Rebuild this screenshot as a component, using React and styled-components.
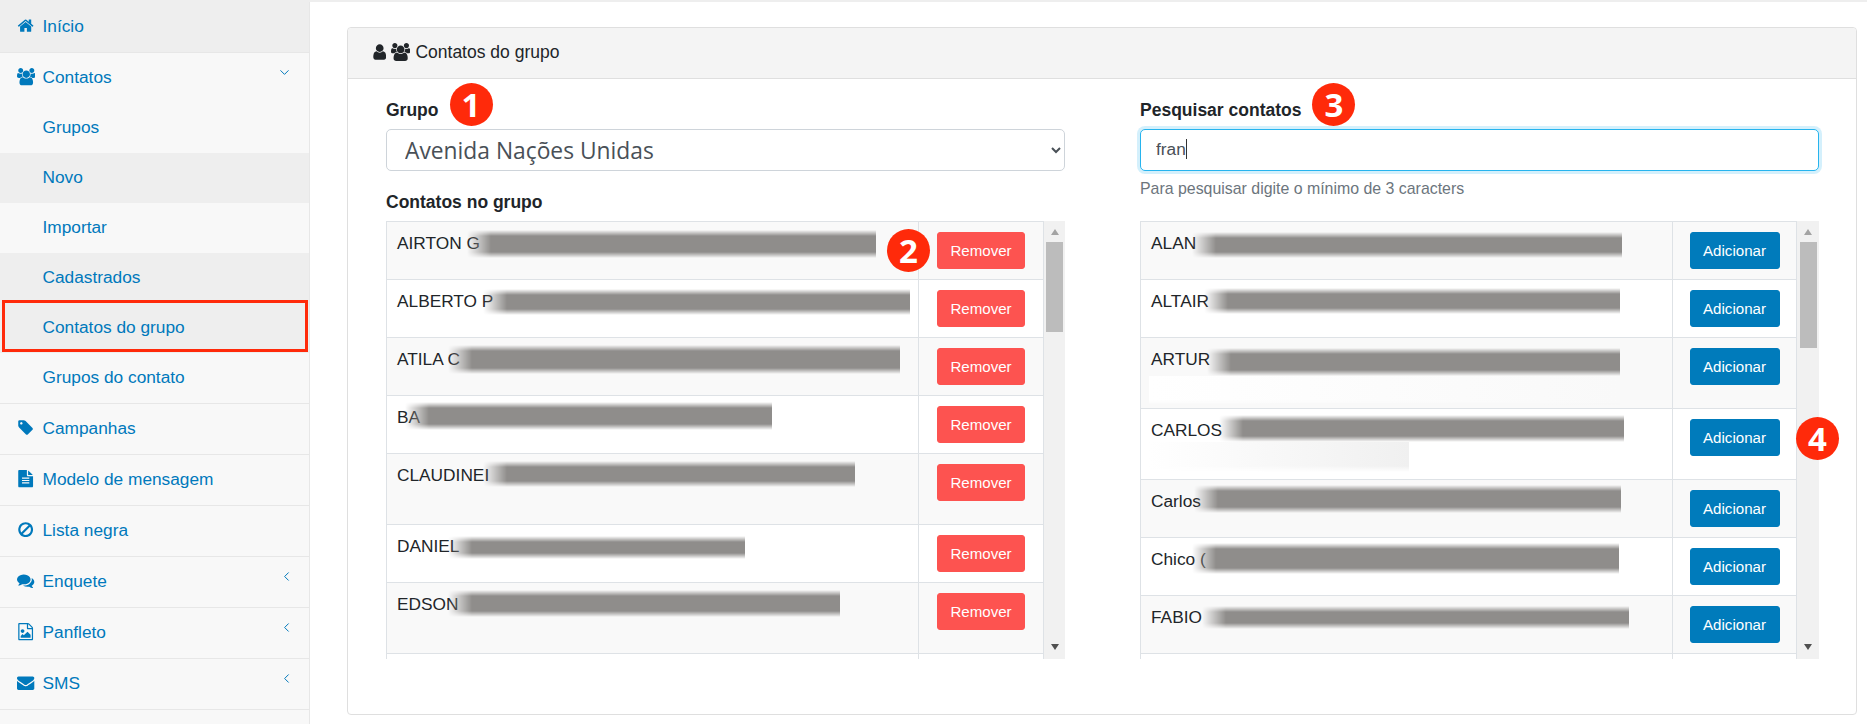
import styled, { createGlobalStyle } from 'styled-components'
import { ChevronDown, ChevronLeft } from 'lucide-react'

const GlobalStyle = createGlobalStyle`
  html, body {
    margin: 0;
    height: 100%;
    overflow: hidden;
    background: #fff;
  }
  body {
    font-family: "Liberation Sans", Arial, sans-serif;
    font-size: 17.3px;
    color: #212529;
  }
  * { box-sizing: border-box; }
`

// Font Awesome 4 glyphs, the react-icons set only has the newer shapes
const glyphs = {
  home: ['0 0 1792 1792', 'M1472 992v480q0 26-19 45t-45 19h-384v-384h-256v384h-384q-26 0-45-19t-19-45v-480q0-1 .5-3t.5-3l575-474 575 474q1 2 1 6zm223-69l-62 74q-8 9-21 11h-3q-13 0-21-7l-692-577-692 577q-12 8-24 7-13-2-21-11l-62-74q-8-10-7-23.5t11-21.5l719-599q32-26 76-26t76 26l244 204v-195q0-14 9-23t23-9h192q14 0 23 9t9 23v408l219 182q10 8 11 21.5t-7 23.5z'],
  users: ['64 0 1920 1792', 'M657 896q-162 5-265 128h-134q-82 0-138-40.5t-56-118.5q0-353 124-353 6 0 43.5 21t97.5 42.5 119 21.5q67 0 133-23-5 37-5 66 0 139 81 256zm1071 637q0 120-73 189.5t-194 69.5h-874q-121 0-194-69.5t-73-189.5q0-53 3.5-103.5t14-109 26.5-108.5 43-97.5 62-81 85.5-53.5 111.5-20q10 0 43 21.5t73 48 107 48 135 21.5 135-21.5 107-48 73-48 43-21.5q61 0 111.5 20t85.5 53.5 62 81 43 97.5 26.5 108.5 14 109 3.5 103.5zm-1024-1277q0 106-75 181t-181 75-181-75-75-181 75-181 181-75 181 75 75 181zm704 384q0 159-112.5 271.5t-271.5 112.5-271.5-112.5-112.5-271.5 112.5-271.5 271.5-112.5 271.5 112.5 112.5 271.5zm576 225q0 78-56 118.5t-138 40.5h-134q-103-123-265-128 81-117 81-256 0-29-5-66 66 23 133 23 59 0 119-21.5t97.5-42.5 43.5-21q124 0 124 353zm-128-609q0 106-75 181t-181 75-181-75-75-181 75-181 181-75 181 75 75 181z'],
  user: ['128 0 1408 1792', 'M1536 1399q0 109-62.5 187t-150.5 78h-854q-88 0-150.5-78t-62.5-187q0-85 8.5-160.5t31.5-152 58.5-131 94-89 134.5-34.5q131 128 313 128t313-128q76 0 134.5 34.5t94 89 58.5 131 31.5 152 8.5 160.5zm-256-887q0 159-112.5 271.5t-271.5 112.5-271.5-112.5-112.5-271.5 112.5-271.5 271.5-112.5 271.5 112.5 112.5 271.5z'],
  tag: ['0 0 1792 1792', 'M576 448q0-53-37.5-90.5t-90.5-37.5-90.5 37.5-37.5 90.5 37.5 90.5 90.5 37.5 90.5-37.5 37.5-90.5zm1067 576q0 53-37 90l-491 492q-39 37-91 37-53 0-90-37l-715-716q-38-37-64.5-101t-26.5-117v-416q0-52 38-90t90-38h416q53 0 117 26.5t102 64.5l715 714q37 39 37 91z'],
  file: ['0 0 1792 1792', 'M1596 476q14 14 28 36h-472v-472q22 14 36 28zm-476 164h544v1056q0 40-28 68t-68 28h-1344q-40 0-68-28t-28-68v-1600q0-40 28-68t68-28h800v544q0 40 28 68t68 28zm160 736v-64q0-14-9-23t-23-9h-704q-14 0-23 9t-9 23v64q0 14 9 23t23 9h704q14 0 23-9t9-23zm0-256v-64q0-14-9-23t-23-9h-704q-14 0-23 9t-9 23v64q0 14 9 23t23 9h704q14 0 23-9t9-23zm0-256v-64q0-14-9-23t-23-9h-704q-14 0-23 9t-9 23v64q0 14 9 23t23 9h704q14 0 23-9t9-23z'],
  ban: ['0 0 1792 1792', 'M1440 893q0-161-87-295l-754 753q137 89 297 89 111 0 211.5-43.5t173.5-116.5 116-174.5 43-212.5zm-999 299l755-754q-135-91-300-91-148 0-273 73t-198 199-73 274q0 162 89 299zm1223-299q0 157-61 300t-163.5 246-245 164-298.5 61-298.5-61-245-164-163.5-246-61-300 61-299.5 163.5-245.5 245-164 298.5-61 298.5 61 245 164 163.5 245.5 61 299.5z'],
  comments: ['0 0 1792 1792', 'M1408 768q0 139-94 257t-256.5 186.5-353.5 68.5q-86 0-176-16-124 88-278 128-36 9-86 16h-3q-11 0-20.5-8t-11.5-21q-1-3-1-6.5t.5-6.5 2-6l2.5-5 3.5-5.5 4-5 4.5-5 4-4.5q5-6 23-25t26-29.5 22.5-29 25-38.5 20.5-44q-124-72-195-177t-71-224q0-139 94-257t256.5-186.5 353.5-68.5 353.5 68.5 256.5 186.5 94 257zm384 256q0 120-71 224.5t-195 176.5q10 24 20.5 44t25 38.5 22.5 29 26 29.5 23 25q1 1 4 4.5t4.5 5 4 5 3.5 5.5l2.5 5 2 6 .5 6.5-1 6.5q-3 14-13 22t-22 7q-50-7-86-16-154-40-278-128-90 16-176 16-271 0-472-132 58 4 88 4 161 0 309-45t264-129q125-92 192-212t67-254q0-77-23-152 129 71 204 178t75 230z'],
  image: ['0 0 1792 1792', 'M1596 380q28 28 48 76t20 88v1152q0 40-28 68t-68 28h-1344q-40 0-68-28t-28-68v-1600q0-40 28-68t68-28h896q40 0 88 20t76 48zm-444-244v376h376q-10-29-22-41l-313-313q-12-12-41-22zm384 1528v-1024h-416q-40 0-68-28t-28-68v-416h-768v1536h1280zm-128-448v320h-1024v-192l192-192 128 128 384-384zm-832-192q-80 0-136-56t-56-136 56-136 136-56 136 56 56 136-56 136-136 56z'],
  envelope: ['0 0 1792 1792', 'M1792 710v794q0 66-47 113t-113 47h-1472q-66 0-113-47t-47-113v-794q44 49 101 87 362 246 497 345 57 42 92.5 65.5t94.5 48 110 24.5h2q51 0 110-24.5t94.5-48 92.5-65.5q170-123 498-345 57-39 100-87zm0-294q0 79-49 151t-122 123q-376 261-468 325-10 7-42.5 30.5t-54 38-52 32.5-57.5 27-50 9h-2q-23 0-50-9t-57.5-27-52-32.5-54-38-42.5-30.5q-91-64-262-182.5t-205-142.5q-62-42-117-115.5t-55-136.5q0-78 41.5-130t118.5-52h1472q65 0 112.5 47t47.5 113z'],
}

const GlyphSvg = styled.svg`
  display: block;
  height: 1em;
  width: auto;
  fill: currentColor;
`

function Glyph({ name }) {
  const [box, d] = glyphs[name]
  return <GlyphSvg viewBox={box}><path d={d} /></GlyphSvg>
}

const Page = styled.div`
  display: flex;
  height: 724px;
  border-top: 2px solid #eee;
`

const Sidebar = styled.nav`
  width: 310px;
  flex-shrink: 0;
  background: #f8f8f8;
  border-right: 1px solid #e7e7e7;
`

const MenuGroup = styled.div`
  border-bottom: 1px solid #e7e7e7;
`

const MenuItem = styled.a`
  position: relative;
  display: flex;
  align-items: center;
  height: 50px;
  padding: 0 17px 2px ${p => (p.$sub ? '42.5px' : '16px')};
  background: ${p => (p.$shaded ? '#eee' : 'transparent')};
  color: #0079bc;
  ${p => p.$marked && `
    &::after {
      content: "";
      position: absolute;
      left: 2px;
      right: 1px;
      top: -3px;
      bottom: 1px;
      border: 3.5px solid #ff2a0a;
    }
  `}
`

const MenuIcon = styled.span`
  display: flex;
  justify-content: center;
  width: 20px;
  margin-right: 6.5px;
  font-size: 17.3px;
`

const MenuCaret = styled.span`
  display: flex;
  margin-left: auto;
  margin-right: ${p => (p.$left ? '-2px' : '0')};
  margin-bottom: 10px;
`

const Main = styled.main`
  flex: 1;
  padding: 25px 10px 0 37px;
`

const Panel = styled.section`
  height: 688px;
  border: 1px solid #dfdfdf;
  border-radius: 4px;
`

const PanelHeader = styled.header`
  display: flex;
  align-items: center;
  gap: 5px;
  height: 51px;
  padding: 0 0 2px 24px;
  background: #f4f4f4;
  border-bottom: 1px solid #dfdfdf;
  border-radius: 4px 4px 0 0;
  font-size: 17.5px;
`

const PanelIcons = styled.span`
  display: flex;
  align-items: center;
  gap: 5px;
  font-size: 18px;
`

const PanelBody = styled.div`
  display: grid;
  grid-template-columns: 679px 679px;
  column-gap: 75px;
  padding: 4px 37px 0 38px;
`

const Column = styled.div`
  position: relative;
`

const FieldHead = styled.div`
  display: flex;
  align-items: center;
  gap: 11px;
  height: 43px;
  margin-bottom: 3px;
`

const FieldLabel = styled.label`
  padding-top: 11px;
  font-size: 17.5px;
  font-weight: 700;
`

const Step = styled.span`
  display: flex;
  align-items: center;
  justify-content: center;
  width: 43px;
  height: 43px;
  border-radius: 50%;
  background: #ff2a0a;
  color: #fff;
  font-family: "Open Sans", sans-serif;
  font-size: 33px;
  font-weight: 700;
  line-height: 1;
`

const FloatingStep = styled(Step)`
  position: absolute;
  left: ${p => p.$x}px;
  top: ${p => p.$y}px;
  z-index: 2;
`

const GroupSelect = styled.select`
  display: block;
  width: 100%;
  height: 42px;
  padding: 1px 12px 0 14px;
  border: 1px solid #ced4da;
  border-radius: 5px;
  background: #fff;
  color: #495057;
  font-family: "Open Sans", sans-serif;
  font-size: 22.8px;
  outline: none;
`

const SearchBox = styled.div`
  position: relative;
`

const SearchInput = styled.input`
  display: block;
  width: 100%;
  height: 42px;
  padding: 0 15px 1px;
  border: 1px solid #27b4ee;
  border-radius: 5px;
  box-shadow: 0 0 0 3px rgba(39, 180, 238, 0.2);
  color: #495057;
  font-family: inherit;
  font-size: 17.3px;
  outline: none;
`

const Caret = styled.span`
  position: absolute;
  left: 46px;
  top: 10px;
  width: 1px;
  height: 20px;
  background: #333;
`

const SubLabel = styled.div`
  height: 50px;
  padding-top: 21px;
  line-height: 20px;
  font-size: 17.5px;
  font-weight: 700;
`

const HelpText = styled.div`
  height: 50px;
  padding-top: 8px;
  line-height: 20px;
  font-size: 15.9px;
  color: #6c757d;
`

const TableFrame = styled.div`
  display: flex;
  height: 438px;
`

const Rows = styled.div`
  flex: 1;
  overflow: hidden;
  border-top: 1px solid #dee2e6;
`

const Row = styled.div`
  position: relative;
  display: flex;
  height: ${p => p.$height}px;
  background: ${p => (p.$odd ? '#f9f9f9' : '#fff')};
  border-bottom: 1px solid #dee2e6;
`

const NameCell = styled.div`
  flex: 1;
  padding: 10px;
  line-height: 22px;
  border-left: 1px solid #dee2e6;
`

const ActionCell = styled.div`
  display: flex;
  justify-content: center;
  width: ${p => p.$width}px;
  padding-top: 10px;
  border-left: 1px solid #dee2e6;
  border-right: 1px solid #dee2e6;
`

const RowButton = styled.button`
  width: ${p => p.$width}px;
  height: 37px;
  padding-bottom: 2px;
  border: 1px solid ${p => p.$color};
  border-radius: 3px;
  background: ${p => p.$color};
  color: #fff;
  font-family: inherit;
  font-size: 15.1px;
`

// Soft grey bars that hide the surnames and phone numbers, same as in the screenshot
const Blur = styled.span`
  position: absolute;
  left: ${p => p.$x}px;
  top: ${p => p.$y}px;
  width: ${p => p.$w}px;
  height: ${p => p.$h}px;
  background: #8f8d8b;
  mask-image:
    linear-gradient(to right, transparent, #000 24px),
    linear-gradient(to bottom, transparent, #000 6px, #000 calc(100% - 6px), transparent);
  mask-composite: intersect;
`

const Wash = styled.span`
  position: absolute;
  left: ${p => p.$x}px;
  top: ${p => p.$y}px;
  width: ${p => p.$w}px;
  height: ${p => p.$h}px;
  background: linear-gradient(to right, #fff, ${p => p.$end});
  mask-image: linear-gradient(to bottom, #000 80%, transparent);
`

const Scrollbar = styled.div`
  display: flex;
  flex-direction: column;
  align-items: center;
  width: ${p => p.$width}px;
  padding: 8px 0 9px;
  background: #f1f1f1;
`

const ArrowUp = styled.span`
  border: 4.5px solid transparent;
  border-top: 0;
  border-bottom: 6px solid #a3a3a3;
`

const ArrowDown = styled.span`
  margin-top: auto;
  border: 4.5px solid transparent;
  border-bottom: 0;
  border-top: 6px solid #505050;
`

const Thumb = styled.span`
  width: 17px;
  height: ${p => p.$height}px;
  margin-top: 7px;
  background: #bcbcbc;
`

const menuTop = [
  { label: 'Grupos', shaded: false },
  { label: 'Novo', shaded: true },
  { label: 'Importar', shaded: false },
  { label: 'Cadastrados', shaded: true },
  { label: 'Contatos do grupo', shaded: true, marked: true },
  { label: 'Grupos do contato', shaded: false },
]

const menuBottom = [
  { label: 'Campanhas', icon: 'tag' },
  { label: 'Modelo de mensagem', icon: 'file' },
  { label: 'Lista negra', icon: 'ban' },
  { label: 'Enquete', icon: 'comments', more: true },
  { label: 'Panfleto', icon: 'image', more: true },
  { label: 'SMS', icon: 'envelope', more: true },
]

const groupRows = [
  { name: 'AIRTON G', height: 58, blur: [81, 8, 409, 28] },
  { name: 'ALBERTO P', height: 58, blur: [97, 9, 427, 26] },
  { name: 'ATILA C', height: 58, blur: [62, 7, 452, 29] },
  { name: 'BA', height: 58, blur: [19, 6, 367, 28] },
  { name: 'CLAUDINEI', height: 71, blur: [97, 7, 372, 26] },
  { name: 'DANIEL', height: 58, blur: [62, 11, 297, 23] },
  { name: 'EDSON', height: 71, blur: [62, 7, 392, 27] },
  { name: '', height: 58 },
]

const searchRows = [
  { name: 'ALAN', height: 58, blur: [52, 10, 430, 26] },
  { name: 'ALTAIR', height: 58, blur: [64, 8, 416, 26] },
  { name: 'ARTUR', height: 71, blur: [67, 10, 413, 28], wash: [9, 38, 471, 29, '#f9f9f9'] },
  { name: 'CARLOS', height: 71, blur: [79, 6, 405, 27], wash: [9, 33, 260, 30, '#f0f0f0'] },
  { name: 'Carlos', height: 58, blur: [54, 5, 427, 28] },
  { name: 'Chico (', height: 58, blur: [52, 5, 427, 31] },
  { name: 'FABIO', height: 58, blur: [62, 10, 427, 23] },
  { name: '', height: 58 },
]

function ContactTable({ rows, actionWidth, buttonWidth, buttonColor, buttonLabel, scrollWidth, thumbHeight }) {
  return (
    <TableFrame>
      <Rows>
        {rows.map((row, i) => (
          <Row key={i} $height={row.height} $odd={i % 2 === 0}>
            <NameCell>{row.name}</NameCell>
            <ActionCell $width={actionWidth}>
              {row.name && <RowButton $width={buttonWidth} $color={buttonColor}>{buttonLabel}</RowButton>}
            </ActionCell>
            {row.blur && <Blur $x={row.blur[0]} $y={row.blur[1]} $w={row.blur[2]} $h={row.blur[3]} />}
            {row.wash && <Wash $x={row.wash[0]} $y={row.wash[1]} $w={row.wash[2]} $h={row.wash[3]} $end={row.wash[4]} />}
          </Row>
        ))}
      </Rows>
      <Scrollbar $width={scrollWidth}>
        <ArrowUp />
        <Thumb $height={thumbHeight} />
        <ArrowDown />
      </Scrollbar>
    </TableFrame>
  )
}

export default function App() {
  return (
    <Page>
      <GlobalStyle />
      <Sidebar>
        <MenuGroup>
          <MenuItem $shaded><MenuIcon><Glyph name="home" /></MenuIcon>Início</MenuItem>
        </MenuGroup>
        <MenuGroup>
          <MenuItem>
            <MenuIcon><Glyph name="users" /></MenuIcon>Contatos
            <MenuCaret><ChevronDown size={15} strokeWidth={1.6} /></MenuCaret>
          </MenuItem>
          {menuTop.map(item => (
            <MenuItem key={item.label} $sub $shaded={item.shaded} $marked={item.marked}>{item.label}</MenuItem>
          ))}
        </MenuGroup>
        {menuBottom.map(item => (
          <MenuGroup key={item.label}>
            <MenuItem>
              <MenuIcon><Glyph name={item.icon} /></MenuIcon>{item.label}
              {item.more && <MenuCaret $left><ChevronLeft size={15} strokeWidth={1.6} /></MenuCaret>}
            </MenuItem>
          </MenuGroup>
        ))}
      </Sidebar>
      <Main>
        <Panel>
          <PanelHeader>
            <PanelIcons><Glyph name="user" /><Glyph name="users" /></PanelIcons>
            Contatos do grupo
          </PanelHeader>
          <PanelBody>
            <Column>
              <FieldHead>
                <FieldLabel>Grupo</FieldLabel>
                <Step>1</Step>
              </FieldHead>
              <GroupSelect defaultValue="avenida">
                <option value="avenida">Avenida Nações Unidas</option>
              </GroupSelect>
              <SubLabel>Contatos no grupo</SubLabel>
              <ContactTable
                rows={groupRows}
                actionWidth={126}
                buttonWidth={88}
                buttonColor="#fd5350"
                buttonLabel="Remover"
                scrollWidth={21}
                thumbHeight={90}
              />
              <FloatingStep $x={501} $y={146}>2</FloatingStep>
            </Column>
            <Column>
              <FieldHead>
                <FieldLabel>Pesquisar contatos</FieldLabel>
                <Step>3</Step>
              </FieldHead>
              <SearchBox>
                <SearchInput defaultValue="fran" readOnly />
                <Caret />
              </SearchBox>
              <HelpText>Para pesquisar digite o mínimo de 3 caracters</HelpText>
              <ContactTable
                rows={searchRows}
                actionWidth={125}
                buttonWidth={90}
                buttonColor="#007bbb"
                buttonLabel="Adicionar"
                scrollWidth={22}
                thumbHeight={106}
              />
              <FloatingStep $x={656} $y={334}>4</FloatingStep>
            </Column>
          </PanelBody>
        </Panel>
      </Main>
    </Page>
  )
}
